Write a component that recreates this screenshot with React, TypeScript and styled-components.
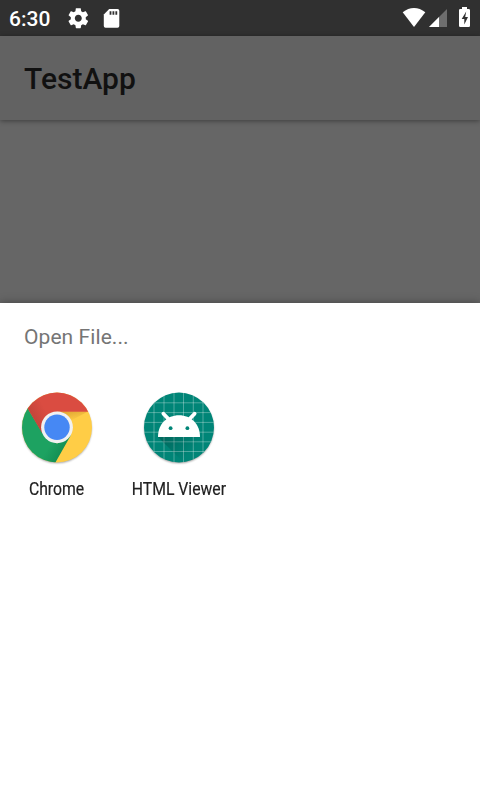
import React from "react";
import styled, { createGlobalStyle } from "styled-components";

const GlobalStyle = createGlobalStyle`
  body { margin: 0; }
  * { box-sizing: border-box; }
`;

const Screen = styled.div`
  width: 480px;
  height: 800px;
  display: flex;
  flex-direction: column;
  overflow: hidden;
  background: #666;
  font-family: Roboto, sans-serif;
`;

const StatusBar = styled.header`
  height: 36px;
  flex: none;
  display: flex;
  justify-content: space-between;
  background: #303030;
`;

const StatusGroup = styled.div`
  display: flex;
  align-items: flex-start;
`;

const StatusIcon = styled.svg`
  display: block;
  flex: none;
`;

const Clock = styled.span`
  width: 58px;
  padding: 1px 0 0 9px;
  font-size: 21px;
  line-height: 36px;
  font-weight: 500;
  color: #fff;
`;

const AppBar = styled.div`
  height: 84px;
  flex: none;
  padding-left: 24px;
  background: #626262;
  box-shadow: 0 1px 5px rgba(0, 0, 0, 0.4);
`;

const AppTitle = styled.h1`
  margin: 0;
  padding-top: 1px;
  font-size: 30px;
  line-height: 84px;
  font-weight: 500;
  color: #111;
`;

const Backdrop = styled.div`
  height: 183px;
  flex: none;
`;

const Sheet = styled.section`
  flex: 1;
  background: #fff;
  box-shadow: 0 0 9px rgba(0, 0, 0, 0.35);
`;

const SheetTitle = styled.h2`
  margin: 0;
  height: 89px;
  padding: 18px 24px 0;
  font-size: 21px;
  line-height: 32px;
  font-weight: 400;
  letter-spacing: 0.08px;
  color: #757575;
`;

const AppGrid = styled.div`
  display: flex;
`;

const AppTile = styled.button<{ $width: number }>`
  width: ${(p) => p.$width}px;
  padding: 0;
  border: 0;
  background: none;
  display: flex;
  flex-direction: column;
  align-items: center;
  font-family: inherit;
`;

const TileIcon = styled.svg`
  display: block;
  width: 74px;
  height: 76px;
`;

const TileLabel = styled.span`
  margin-top: 9px;
  font-size: 18px;
  line-height: 24px;
  white-space: nowrap;
  color: #212121;
  -webkit-text-stroke: 0.2px #212121;
  transform: scaleX(0.875);
`;

const ChromeIcon = () => (
  <TileIcon viewBox="20 392 74 76">
    <defs>
      <clipPath id="disc"><circle cx="57" cy="427.5" r="35" /></clipPath>
      <linearGradient id="redShade" x1="30" y1="415" x2="44" y2="407" gradientUnits="userSpaceOnUse">
        <stop stopColor="#c3443a" /><stop offset="1" stopColor="#da4c41" />
      </linearGradient>
      <linearGradient id="greenShade" x1="66" y1="452" x2="51" y2="443" gradientUnits="userSpaceOnUse">
        <stop stopColor="#128b51" /><stop offset="1" stopColor="#1da261" />
      </linearGradient>
      <linearGradient id="yellowShade" x1="72" y1="411.5" x2="74" y2="421" gradientUnits="userSpaceOnUse">
        <stop stopColor="#e3ab36" /><stop offset="1" stopColor="#ffcd46" />
      </linearGradient>
      <filter id="chromeBlur"><feGaussianBlur stdDeviation="0.8" /></filter>
    </defs>
    <circle cx="57" cy="428.6" r="34.5" fill="#000" opacity="0.4" filter="url(#chromeBlur)" />
    <g clipPath="url(#disc)">
      <path d="M20 392H94V468H20Z" fill="#ffcd46" />
      <path d="M57 411.5H88L72 420Z" fill="url(#yellowShade)" />
      <path d="M20 394L28.3 409.3L42 432L57 443.5L71 435L54 465H20Z" fill="url(#greenShade)" />
      <path d="M20 392H94V411.7H57L42 433L22 399Z" fill="url(#redShade)" />
    </g>
    <circle cx="57" cy="427.3" r="15.9" fill="#f1f1f1" />
    <circle cx="57" cy="427.3" r="12.7" fill="#4688f4" />
  </TileIcon>
);

const gridX = [154, 164, 174, 183.5, 193.3, 203];
const gridY = [402.8, 412.6, 422.4, 432.2, 441.8, 451.5];

const AndroidIcon = () => (
  <TileIcon viewBox="142 392 74 76">
    <defs>
      <clipPath id="tealDisc"><circle cx="179" cy="427.5" r="35" /></clipPath>
      <linearGradient id="longShade" x1="168" y1="435" x2="188" y2="455" gradientUnits="userSpaceOnUse">
        <stop stopColor="#000" stopOpacity="0.2" /><stop offset="1" stopColor="#000" stopOpacity="0" />
      </linearGradient>
      <filter id="androidBlur"><feGaussianBlur stdDeviation="0.8" /></filter>
    </defs>
    <circle cx="179" cy="428.6" r="34.5" fill="#000" opacity="0.45" filter="url(#androidBlur)" />
    <g clipPath="url(#tealDisc)">
      <path d="M142 392H216V468H142Z" fill="#008577" />
      <g stroke="#fff" strokeOpacity="0.35" strokeWidth="0.9">
        {gridX.map((x) => <path key={x} d={`M${x} 392V468`} />)}
        {gridY.map((y) => <path key={y} d={`M142 ${y}H216`} />)}
      </g>
      <path d="M158 437L190 469H216V453L200 437Z" fill="url(#longShade)" />
    </g>
    <path d="M163.4 413.7L169.5 420M194.6 413.7L188.5 420" stroke="#fff" strokeWidth="3.8" strokeLinecap="round" />
    <path d="M158 437C158 424 167 415.3 179 415.3S200 424 200 437Z" fill="#fff" />
    <circle cx="170.6" cy="428.2" r="1.9" fill="#008577" />
    <circle cx="187.4" cy="428.2" r="1.9" fill="#008577" />
  </TileIcon>
);

export default function App() {
  return (
    <>
      <GlobalStyle />
      <Screen>
        <StatusBar>
          <StatusGroup>
            <Clock>6:30</Clock>
            <StatusIcon width="70" height="36" viewBox="58 0 70 36" fill="#fff">
              <g transform="translate(66.3 6.2)">
                <path d="M19.43 12.98c.04-.32.07-.64.07-.98s-.03-.66-.07-.98l2.11-1.65c.19-.15.24-.42.12-.64l-2-3.46c-.12-.22-.39-.3-.61-.22l-2.49 1c-.52-.4-1.08-.73-1.69-.98l-.38-2.65C14.46 2.18 14.25 2 14 2h-4c-.25 0-.46.18-.49.42l-.38 2.65c-.61.25-1.17.59-1.69.98l-2.49-1c-.23-.09-.49 0-.61.22l-2 3.46c-.13.22-.07.49.12.64l2.11 1.65c-.04.32-.07.65-.07.98s.03.66.07.98l-2.11 1.65c-.19.15-.24.42-.12.64l2 3.46c.12.22.39.3.61.22l2.49-1c.52.4 1.08.73 1.69.98l.38 2.65c.03.24.24.42.49.42h4c.25 0 .46-.18.49-.42l.38-2.65c.61-.25 1.17-.59 1.69-.98l2.49 1c.23.09.49 0 .61-.22l2-3.46c.12-.22.07-.49-.12-.64l-2.11-1.65zM12 15.5c-1.93 0-3.5-1.57-3.5-3.5s1.57-3.5 3.5-3.5 3.5 1.57 3.5 3.5-1.57 3.5-3.5 3.5z" />
              </g>
              <path d="M109.2 9H117.5Q119.3 9 119.3 10.8V26Q119.3 27.8 117.5 27.8H105.6Q103.8 27.8 103.8 26V14.4Z" />
              <path d="M109.6 11.2h1.8v3.6h-1.8zM112.5 11.2h1.8v3.6h-1.8zM115.4 11.2h1.8v3.6h-1.8z" fill="#303030" />
            </StatusIcon>
          </StatusGroup>
          <StatusIcon width="80" height="36" viewBox="400 0 80 36" fill="#fff">
            <path d="M414 27L402.7 12.3Q408 8 414 8T425.3 12.3Z" />
            <path d="M447 9V27H429Z" fillOpacity="0.3" />
            <path d="M439 17V27H429Z" />
            <path d="M462 7H467V9H468.7Q470 9 470 10.3V25.7Q470 27 468.7 27H460.3Q459 27 459 25.7V10.3Q459 9 460.3 9H462Z" />
            <path d="M466.2 11.5L461.7 19H464.3V24.5L468 17H465.2Z" fill="#303030" />
          </StatusIcon>
        </StatusBar>
        <AppBar><AppTitle>TestApp</AppTitle></AppBar>
        <Backdrop />
        <Sheet>
          <SheetTitle>Open File...</SheetTitle>
          <AppGrid>
            <AppTile $width={114}>
              <ChromeIcon />
              <TileLabel>Chrome</TileLabel>
            </AppTile>
            <AppTile $width={130}>
              <AndroidIcon />
              <TileLabel>HTML Viewer</TileLabel>
            </AppTile>
          </AppGrid>
        </Sheet>
      </Screen>
    </>
  );
}
